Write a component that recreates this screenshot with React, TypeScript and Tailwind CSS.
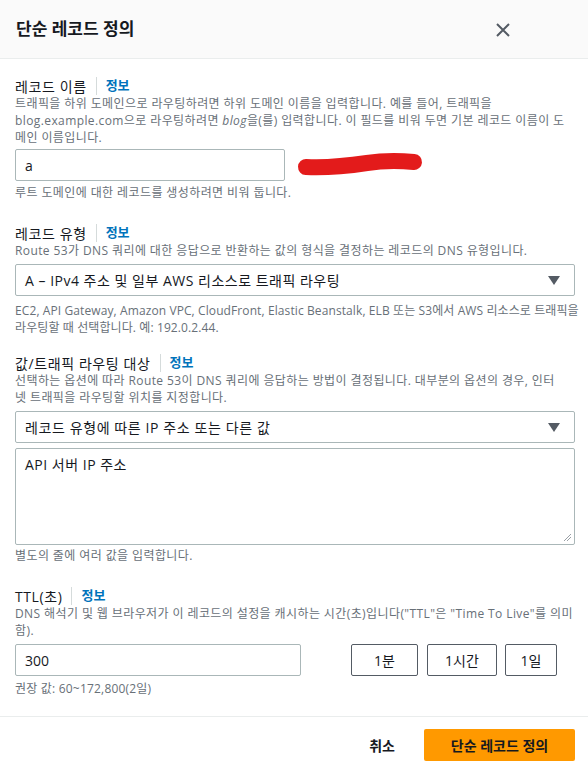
import React from 'react';

const font = { fontFamily: '"Open Sans", "Noto Sans CJK KR", sans-serif' };

const Label = ({ text }: { text: string }) => (
    <div className="flex h-[18px] items-center text-[14px] tracking-[0.6px] text-[#16191f]">
        <span>{text}</span>
        <span className="mx-[9px] h-[18px] w-px bg-[#d5dbdb]" />
        <a href="#" className="text-[13px] font-bold tracking-normal text-[#0073bb]">정보</a>
    </div>
);

const Desc = ({ children, className = 'tracking-[0.4px]' }: { children: React.ReactNode; className?: string }) => (
    <div className={`whitespace-nowrap text-[12px] leading-[17px] text-[#687078] ${className}`}>{children}</div>
);

const Arrow = () => (
    <svg width="12" height="10" viewBox="0 0 12 10" className="shrink-0">
        <path d="M0 1 L12 1 L6 10 Z" fill="#545b64" />
    </svg>
);

const App = () => {
    return (
        <div className="h-[766px] w-[588px] overflow-hidden bg-white" style={font}>
            {/* header */}
            <div className="flex h-[59px] items-center justify-between border-b border-[#eaeded] bg-[#fafafa] pl-[16px] pr-[78px]">
                <h1 className="text-[17px] font-bold text-[#16191f]">단순 레코드 정의</h1>
                <svg width="14" height="14" viewBox="0 0 14 14" className="mt-[2px]">
                    <path d="M1 1 L13 13 M13 1 L1 13" stroke="#545b64" strokeWidth="2" />
                </svg>
            </div>

            <div className="pl-[15px] pr-[13px] pt-[18px]">
                {/* record name */}
                <Label text="레코드 이름" />
                <Desc>
                    트래픽을 하위 도메인으로 라우팅하려면 하위 도메인 이름을 입력합니다. 예를 들어, 트래픽을
                    <br />
                    blog.example.com으로 라우팅하려면 <i>blog</i>을(를) 입력합니다. 이 필드를 비워 두면 기본 레코드 이름이 도
                    <br />
                    메인 이름입니다.
                </Desc>
                <div className="mt-[3px] flex items-center">
                    <div className="flex h-[32px] w-[270px] shrink-0 items-center rounded-[2px] border border-[#aab7b8] px-[9px] text-[14px] text-[#16191f]">
                        a
                    </div>
                    <svg width="126" height="26" viewBox="0 0 126 26" className="ml-[12px] -mt-[3px] shrink-0">
                        <path d="M9 16 C 30 17, 50 15, 70 12 C 90 9, 105 10, 117 11" stroke="#e31b1b" strokeWidth="16" strokeLinecap="round" fill="none" />
                    </svg>
                </div>
                <Desc className="mt-[3px] tracking-[0.4px]">루트 도메인에 대한 레코드를 생성하려면 비워 둡니다.</Desc>

                {/* record type */}
                <div className="mt-[23px]">
                    <Label text="레코드 유형" />
                </div>
                <Desc>Route 53가 DNS 쿼리에 대한 응답으로 반환하는 값의 형식을 결정하는 레코드의 DNS 유형입니다.</Desc>
                <div className="mt-[5px] flex h-[32px] items-center justify-between rounded-[2px] border border-[#aab7b8] pl-[9px] pr-[14px] text-[14px] tracking-[0.5px] text-[#16191f]">
                    <span>A – IPv4 주소 및 일부 AWS 리소스로 트래픽 라우팅</span>
                    <Arrow />
                </div>
                <Desc className="mt-[6px] tracking-[0.1px]">
                    EC2, API Gateway, Amazon VPC, CloudFront, Elastic Beanstalk, ELB 또는 S3에서 AWS 리소스로 트래픽을
                    <br />
                    라우팅할 때 선택합니다. 예: 192.0.2.44.
                </Desc>

                {/* value */}
                <div className="mt-[18px]">
                    <Label text="값/트래픽 라우팅 대상" />
                </div>
                <Desc>
                    선택하는 옵션에 따라 Route 53이 DNS 쿼리에 응답하는 방법이 결정됩니다. 대부분의 옵션의 경우, 인터
                    <br />
                    넷 트래픽을 라우팅할 위치를 지정합니다.
                </Desc>
                <div className="mt-[5px] flex h-[32px] items-center justify-between rounded-[2px] border border-[#aab7b8] pl-[9px] pr-[14px] text-[14px] tracking-[0.6px] text-[#16191f]">
                    <span>레코드 유형에 따른 IP 주소 또는 다른 값</span>
                    <Arrow />
                </div>
                <div className="relative mt-[5px] h-[97px] rounded-[2px] border border-[#aab7b8] px-[9px] pt-[5px] text-[14px] tracking-[0.5px] text-[#16191f]">
                    API 서버 IP 주소
                    <svg width="9" height="9" viewBox="0 0 9 9" className="absolute bottom-[2px] right-[2px]">
                        <path d="M1 8 L8 1 M4 8 L8 4" stroke="#9aa0a6" strokeWidth="1" />
                    </svg>
                </div>
                <Desc className="mt-[2px] tracking-[0.4px]">별도의 줄에 여러 값을 입력합니다.</Desc>

                {/* TTL */}
                <div className="mt-[23px]">
                    <Label text="TTL(초)" />
                </div>
                <Desc>
                    DNS 해석기 및 웹 브라우저가 이 레코드의 설정을 캐시하는 시간(초)입니다("TTL"은 "Time To Live"를 의미
                    <br />
                    함).
                </Desc>
                <div className="mt-[5px] flex items-center">
                    <div className="flex h-[32px] w-[286px] items-center rounded-[2px] border border-[#aab7b8] px-[9px] text-[14px] text-[#16191f]">
                        300
                    </div>
                    <button className="ml-[50px] h-[32px] w-[67px] rounded-[2px] border border-[#545b64] text-[14px] text-[#16191f]">1분</button>
                    <button className="ml-[9px] h-[32px] w-[70px] rounded-[2px] border border-[#545b64] text-[14px] text-[#16191f]">1시간</button>
                    <button className="ml-[8px] h-[32px] w-[52px] rounded-[2px] border border-[#545b64] text-[14px] text-[#16191f]">1일</button>
                </div>
                <Desc className="mt-[4px] tracking-[0.2px]">권장 값: 60~172,800(2일)</Desc>
            </div>

            {/* footer */}
            <div className="mt-[19px] flex items-center justify-end gap-[29px] border-t border-[#eaeded] pl-[15px] pr-[13px] pt-[12px]">
                <button className="text-[14px] font-semibold text-[#16191f]">취소</button>
                <button className="h-[32px] w-[151px] rounded-[2px] bg-[#ff9900] text-[14px] font-semibold text-[#16191f]">단순 레코드 정의</button>
            </div>
        </div>
    );
};

export default App;
